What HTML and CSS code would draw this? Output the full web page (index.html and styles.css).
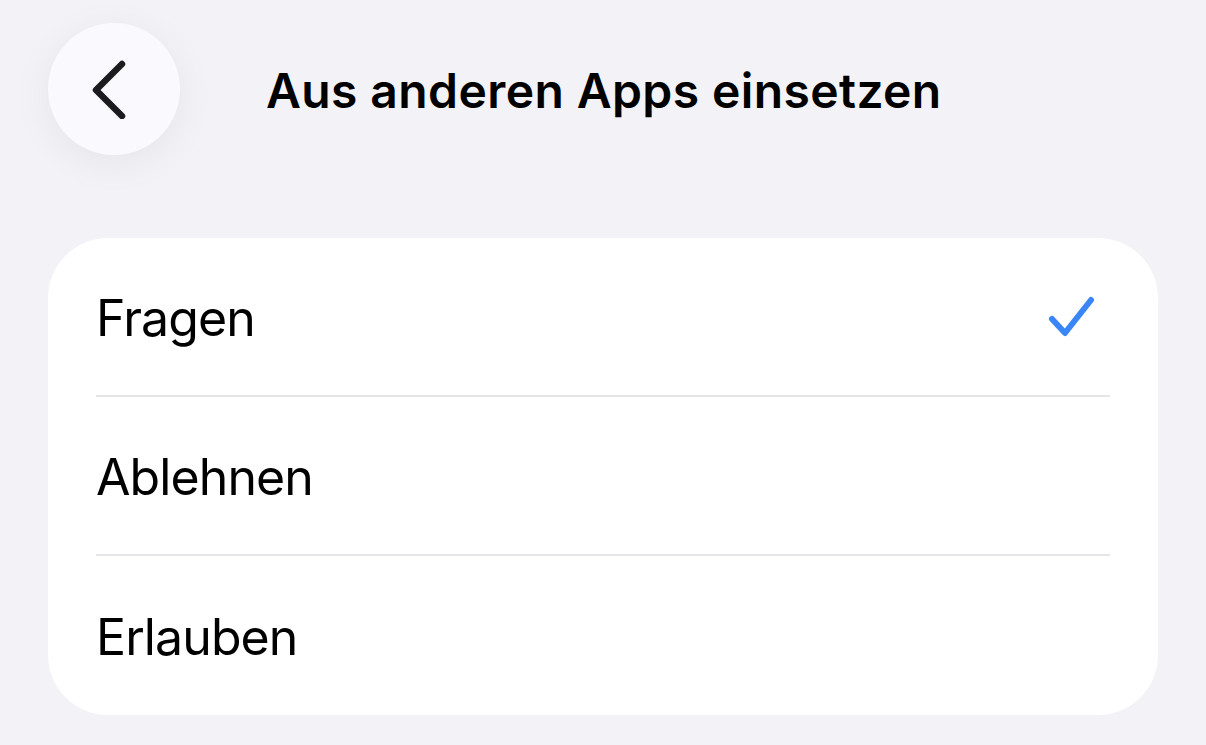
FILE: index.html
```html
<!DOCTYPE html>
<html lang="de">
<head>
<meta charset="utf-8">
<title>Aus anderen Apps einsetzen</title>
<link rel="stylesheet" href="styles.css">
</head>
<body>
<div class="screen">
  <header class="nav">
    <button class="back" aria-label="Zurück">
      <svg width="40" height="60" viewBox="0 0 40 60">
        <path d="M32 5 L6 31 L32 57" fill="none" stroke="#1c1c1e" stroke-width="6.5" stroke-linecap="round" stroke-linejoin="round"/>
      </svg>
    </button>
    <h1 class="title">Aus anderen Apps einsetzen</h1>
  </header>
  <section class="card">
    <div class="row">
      <span class="label">Fragen</span>
      <svg class="check" width="52" height="48" viewBox="0 0 52 48">
        <path d="M6 26 L19 40 L45 7" fill="none" stroke="#3a86f6" stroke-width="6" stroke-linecap="round" stroke-linejoin="round"/>
      </svg>
    </div>
    <div class="row">
      <span class="label">Ablehnen</span>
    </div>
    <div class="row">
      <span class="label">Erlauben</span>
    </div>
  </section>
</div>
</body>
</html>
```
FILE: styles.css
```css
html, body {
  margin: 0;
  padding: 0;
  background: #f2f2f7;
}
.screen {
  width: 1206px;
  height: 745px;
  overflow: hidden;
  font-family: Inter, "Liberation Sans", sans-serif;
  color: #000;
}
.nav {
  display: flex;
  align-items: center;
  padding: 23px 0 0 48px;
}
.back {
  width: 132px;
  height: 132px;
  border-radius: 50%;
  border: none;
  background: #fafafe;
  box-shadow: 0 8px 40px rgba(0, 0, 0, 0.06);
  display: flex;
  align-items: center;
  justify-content: center;
  padding: 0 8px 0 0;
  flex: none;
}
.title {
  margin: 4px 0 0 86px;
  font-size: 48px;
  line-height: 58px;
  font-weight: 600;
  letter-spacing: 0.4px;
}
.card {
  margin: 83px 48px 0 48px;
  background: #fff;
  border-radius: 60px;
  padding: 0 48px;
}
.row {
  height: 157px;
  display: flex;
  align-items: center;
  justify-content: space-between;
  border-bottom: 2px solid #e5e5ea;
}
.row:last-child {
  border-bottom: none;
  height: 159px;
}
.label {
  font-size: 50px;
  font-weight: 400;
  letter-spacing: -0.9px;
  padding-top: 2px;
}
.check {
  margin-right: 12px;
}
```
